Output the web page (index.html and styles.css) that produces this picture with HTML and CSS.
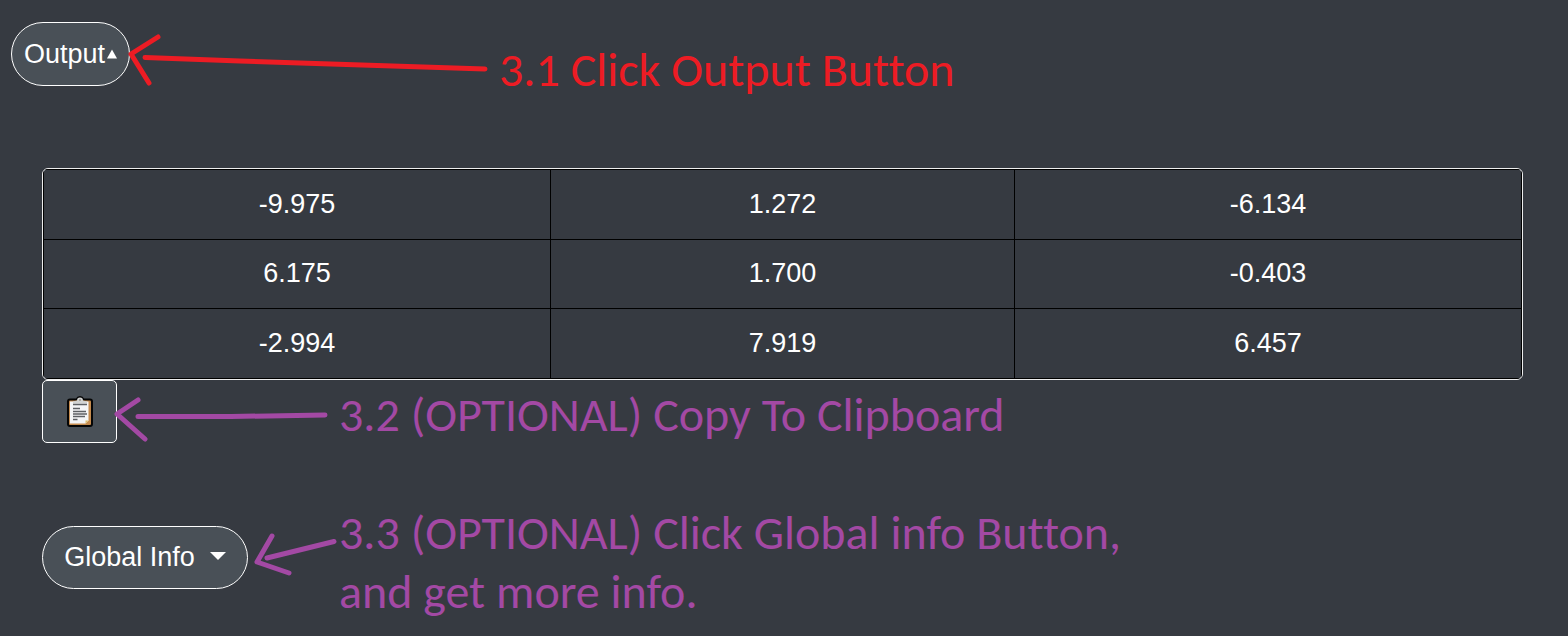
FILE: index.html
```html
<!DOCTYPE html>
<html lang="en">
<head>
<meta charset="utf-8">
<title>Output</title>
<link rel="stylesheet" href="styles.css">
</head>
<body>
<main class="page">
  <section class="step step-output">
    <button class="btn pill pill-output" type="button">Output<svg class="caret-up" viewBox="0 0 10 10" aria-hidden="true"><path d="M5 0.5 10 9.5H0Z"/></svg></button>
    <svg class="arrow arrow-output" viewBox="130 22 360 64" aria-hidden="true"><path d="M158 37 131 54 149 83M145 57.500 240 61 485 69"/></svg>
    <p class="note note-red">3.1 Click Output Button</p>
  </section>

  <section class="result">
    <div class="table-frame">
      <table class="matrix">
        <colgroup><col class="col-outer"><col class="col-mid"><col class="col-outer"></colgroup>
        <tbody>
          <tr><td>-9.975</td><td>1.272</td><td>-6.134</td></tr>
          <tr><td>6.175</td><td>1.700</td><td>-0.403</td></tr>
          <tr><td>-2.994</td><td>7.919</td><td>6.457</td></tr>
        </tbody>
      </table>
    </div>
    <div class="step">
      <button class="btn copy" type="button" aria-label="Copy to clipboard">
        <svg class="clipboard" viewBox="0 0 26 32" aria-hidden="true">
          <path d="M3 2.500H9Q10 0 13 0T17 2.500H23Q26 2.500 26 5.500V28Q26 31 23 31H3Q0 31 0 28V5.500Q0 2.500 3 2.500Z" fill="#050505"/>
          <rect x="2" y="4.500" width="22" height="24.500" rx="1" fill="#c58b4e"/>
          <path d="M3 5.500H21.500V24.500L18.500 27.500H3Z" fill="#f4f5f7"/>
          <path d="M18.500 27.500V24.500H21.500Z" fill="#d9c070"/>
          <path d="M6 7.500V5.500L10 4.500Q10 1.500 13 1.500T16 4.500L20 5.500V7.500Z" fill="#d2d3d2"/>
          <circle cx="13" cy="4" r="1" fill="#99958e"/>
          <path d="M6 8.500H20M6 12.500H13M6 15.500H19M6 18H20M6 20.500H18M6 23.500H10.500" stroke="#5d6065" stroke-width="1.400"/>
        </svg>
      </button>
      <svg class="arrow arrow-copy" viewBox="117 380 210 63" aria-hidden="true"><path d="M138 400 117 414 145 439M138 416.500H231L325 415"/></svg>
      <p class="note note-copy">3.2 (OPTIONAL) Copy To Clipboard</p>
    </div>
    <div class="step step-info">
      <button class="btn pill pill-info" type="button">Global Info<svg class="caret-down" viewBox="0 0 16 8" aria-hidden="true"><path d="M0 0H16L8 8Z"/></svg></button>
      <svg class="arrow arrow-info" viewBox="248 526 88 63" aria-hidden="true"><path d="M272 536 257 562 289 573M267 558 334 541.500"/></svg>
      <p class="note note-info">3.3 (OPTIONAL) Click Global info Button,<br>and get more info.</p>
    </div>
  </section>
</main>
</body>
</html>
```
FILE: styles.css
```css
* { box-sizing: border-box; }

body {
  margin: 0;
  background: #363a41;
  color: #fff;
  font-family: "Liberation Sans", Arial, sans-serif;
  font-size: 27px;
}

.page { padding: 22px 0 0; }

.step {
  display: flex;
  align-items: flex-start;
}

.step-output { padding-left: 11px; }

.btn {
  display: flex;
  flex: none;
  align-items: center;
  justify-content: center;
  height: 63px;
  padding: 0;
  border: 1px solid #fff;
  border-radius: 5px;
  background: #495057;
  color: #fff;
  font: inherit;
}

.pill { border-radius: 32px; }
.pill-output { width: 119px; height: 64px; gap: 2px; }
.pill-info { width: 206px; gap: 15px; }
.copy { width: 75px; }

.caret-up { width: 10px; height: 10px; fill: #fff; }
.caret-down { width: 16px; height: 8px; margin-top: -4px; fill: #fff; }
.clipboard { width: 26px; height: 32px; }

.result { padding: 69px 45px 0 42px; }

.table-frame {
  overflow: hidden;
  border: 1px solid #eee;
  border-radius: 6px;
}

.matrix {
  width: 100%;
  height: 210px;
  table-layout: fixed;
  border-collapse: collapse;
}

.col-outer { width: 34.3%; }
.col-mid { width: 31.4%; }

.matrix td {
  padding: 0;
  border: 1px solid #000;
  text-align: center;
}

.arrow {
  flex: none;
  overflow: visible;
  fill: none;
  stroke: #a349a4;
  stroke-width: 5;
  stroke-linecap: round;
  stroke-linejoin: round;
}

.arrow-output { width: 360px; height: 64px; stroke: #ed1c24; }
.arrow-copy { width: 210px; height: 63px; }
.arrow-info { width: 88px; height: 63px; }

.note {
  margin: 0;
  color: #a349a4;
  font-family: Calibri, Carlito, Lato, sans-serif;
  font-size: 48px;
  font-variant-ligatures: none;
  line-height: 59px;
}

.note-red { margin: 18px 0 0 9px; color: #ed1c24; }
.note-copy { margin: 5px 0 0 12px; }

.step-info { padding-top: 59px; }
.step-info .btn, .arrow-info { margin-top: 23px; }
.note-info { margin-left: 3px; }
```
